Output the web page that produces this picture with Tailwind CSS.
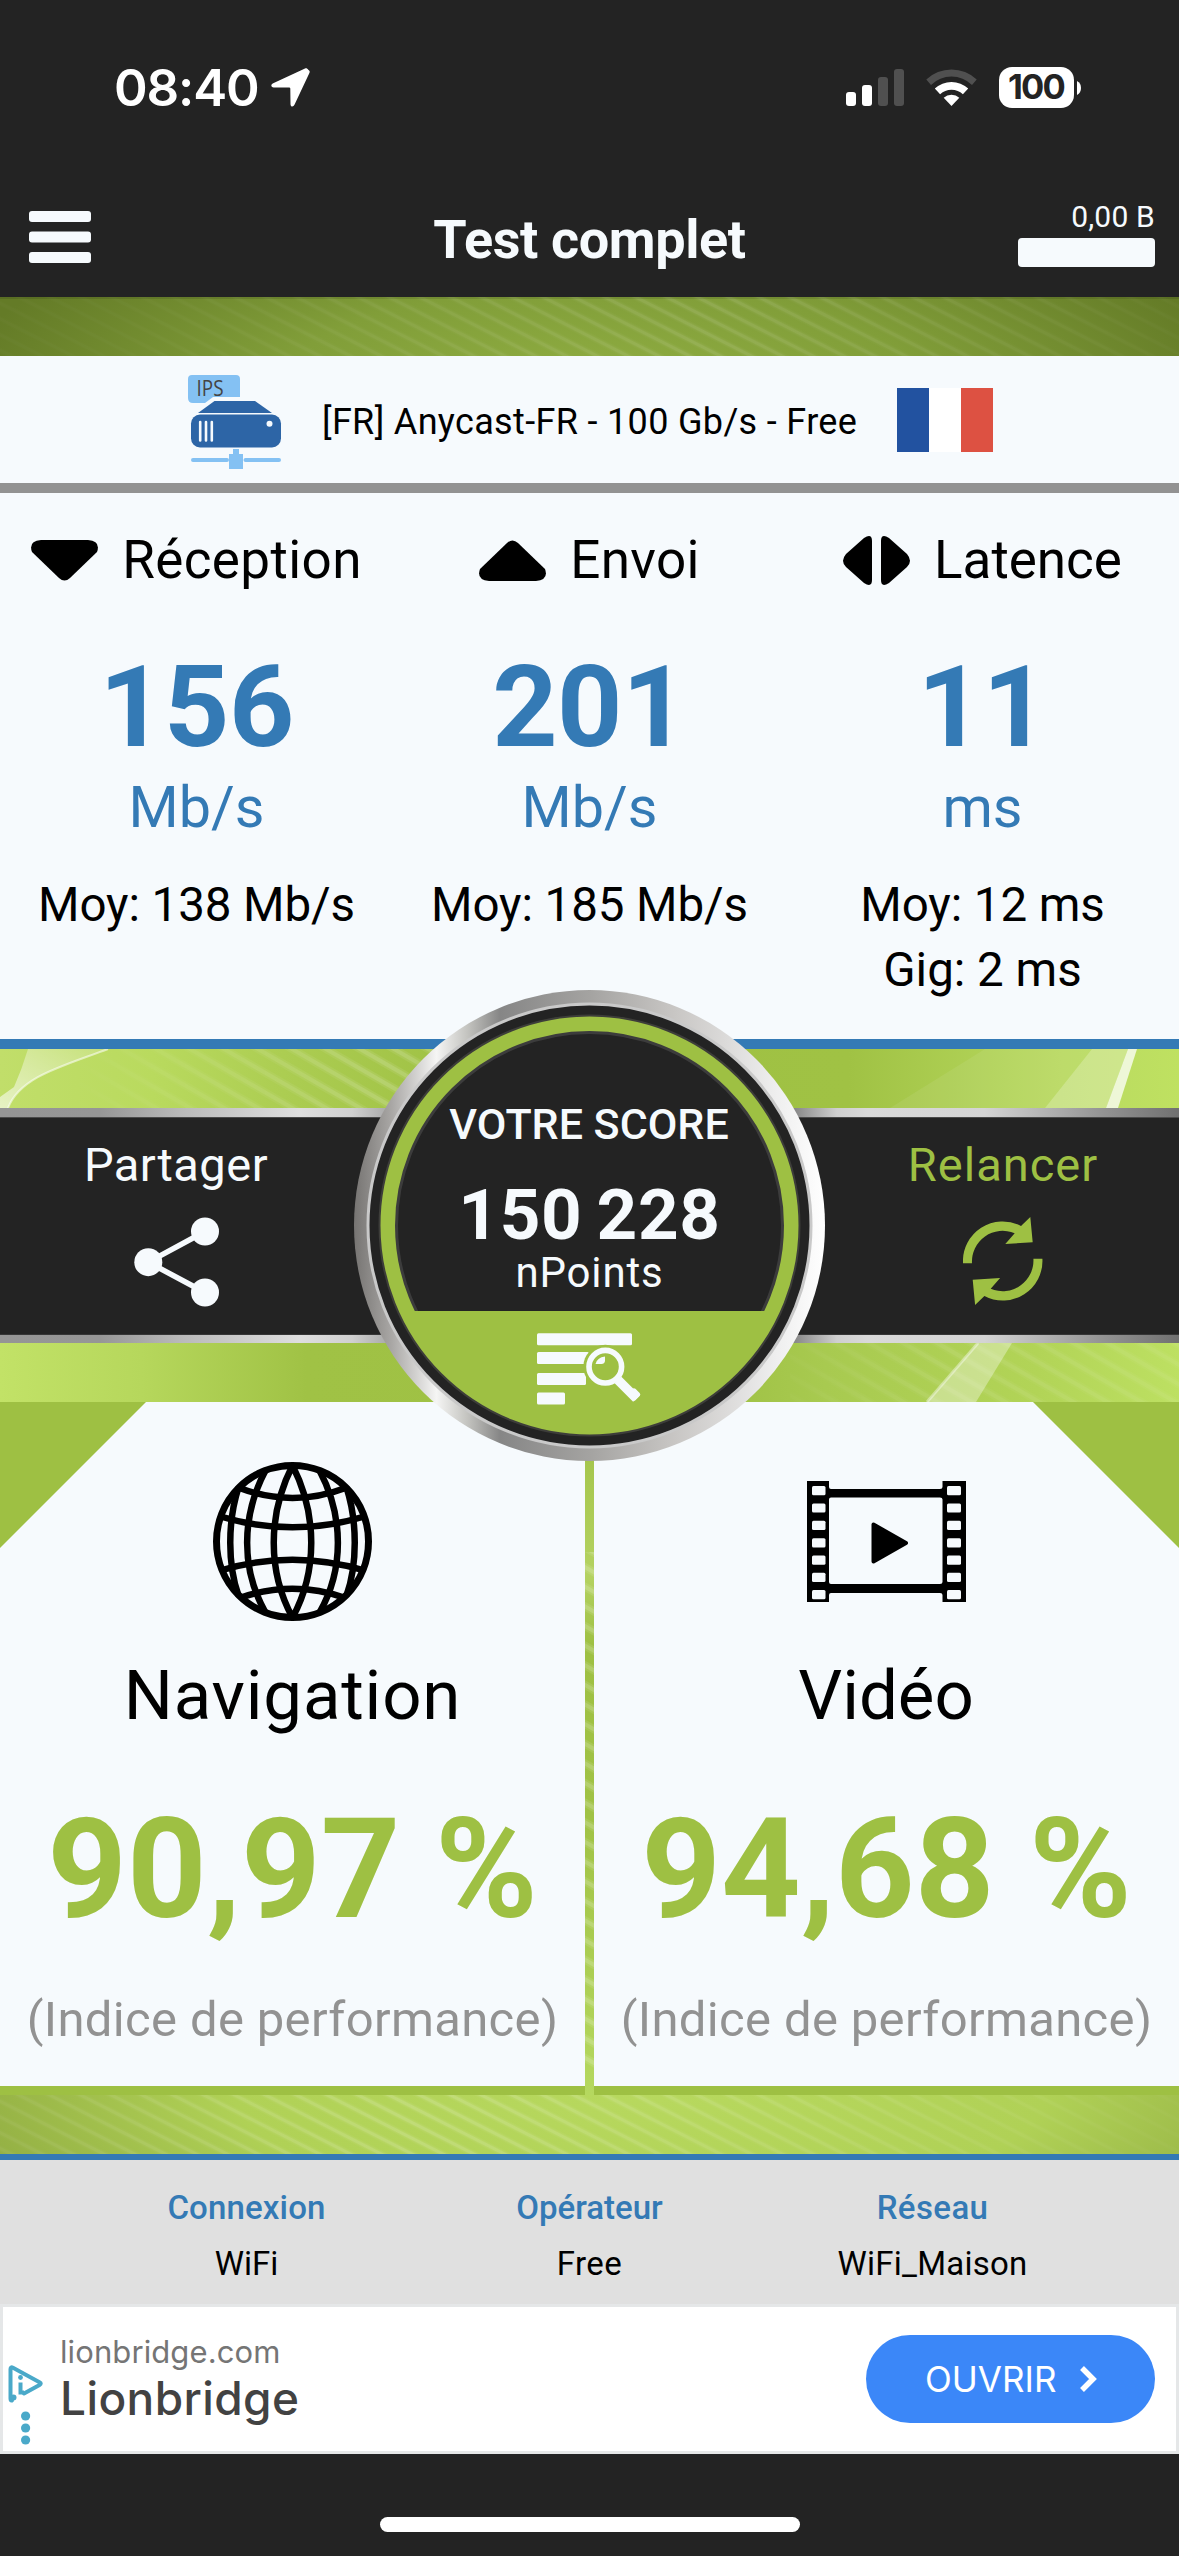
<!DOCTYPE html>
<html lang="fr">
<head>
<meta charset="utf-8">
<meta name="viewport" content="width=device-width, initial-scale=1">
<title>Test complet</title>
<script src="https://cdn.jsdelivr.net/npm/@tailwindcss/browser@4"></script>
</head>
<body class="bg-[#232323]">
<div class="flex h-[2556px] w-[1179px] flex-col overflow-hidden bg-[#232323] font-['Roboto',sans-serif] text-black">

  <!-- Status bar -->
  <div class="flex h-[176px] shrink-0 items-center justify-between pr-[98px] pb-px pl-[114px] text-white">
    <div class="flex items-center gap-[12px]">
      <span class="font-['Inter',sans-serif] text-[51px] leading-none font-semibold tracking-[-1.1px]">08:40</span>
      <svg class="h-[39px] w-[39px]" viewBox="0 0 39 39"><path d="M37.2 1.8C38.8 2.6 39 3.6 38.4 5L23.6 36.6C22.3 39.4 19.6 39 19.5 36.2L19.3 20.6Q19.2 19.6 18.2 19.6L2.7 19.4C-.1 19.3-.6 16.5 2.2 15.2L34 .6C35.3 0 36.4.6 37.2 1.8Z" fill="#fff"/></svg>
    </div>
    <div class="flex items-center">
      <svg class="h-[37px] w-[58px]" viewBox="0 0 58 37"><rect x="0" y="23" width="10" height="14" rx="3" fill="#fff"/><rect x="16" y="16" width="10" height="21" rx="3" fill="#fff"/><rect x="32" y="8" width="10" height="29" rx="3" fill="#505050"/><rect x="48" y="0" width="10" height="37" rx="3" fill="#505050"/></svg>
      <svg class="ml-[22px] h-[37px] w-[51px]" viewBox="0 0 51 37"><path d="M.3 10.6A36.5 36.5 0 0 1 50.7 10.6L46 15.9A29.5 29.5 0 0 0 5 15.9Z" fill="#505050"/><path d="M8.8 19.6A24.3 24.3 0 0 1 42.2 19.6L36.9 25.2A16.5 16.5 0 0 0 14.1 25.2Z" fill="#fff"/><path d="M17.7 28.8A11.5 11.5 0 0 1 33.3 28.8L25.5 37Z" fill="#fff"/></svg>
      <div class="ml-[22px] flex h-[41px] w-[75px] items-center justify-center rounded-[13px] bg-white font-['Inter',sans-serif] text-[34.5px] leading-none font-bold tracking-[-1.8px] text-[#232323]"><span class="-ml-px">100</span></div>
      <svg class="ml-[3px] h-[14px] w-[4px]" viewBox="0 0 4 14"><path d="M0 0Q4 2 4 7T0 14Z" fill="#fff"/></svg>
    </div>
  </div>

  <!-- Navigation bar -->
  <div class="grid h-[121px] shrink-0 grid-cols-[1fr_auto_1fr] items-start px-[24px] text-[#f6fafd]">
    <svg class="mt-[35px] ml-[5px] h-[52px] w-[62px]" viewBox="0 0 62 52" fill="#f6fafd"><rect width="62" height="11" rx="3"/><rect y="20.500" width="62" height="11" rx="3"/><rect y="41" width="62" height="11" rx="3"/></svg>
    <h1 class="mt-[32px] text-[54px] leading-[64px] font-bold tracking-[-0.4px]">Test complet</h1>
    <div class="mt-[23px] flex flex-col items-end gap-[3px]">
      <span class="text-[30px] leading-[36px] tracking-[0.2px]">0,00 B</span>
      <div class="h-[29px] w-[137px] rounded-[4px] bg-[#f6fafd]"></div>
    </div>
  </div>

  <!-- Decorative strip under the header -->
  <svg class="h-[59px] w-full shrink-0" viewBox="0 0 1179 59">
    <defs>
      <pattern id="lines" width="40" height="14" patternUnits="userSpaceOnUse" patternTransform="rotate(27)"><rect y="4" width="40" height="3" fill="#fff" opacity=".12"/><rect y="2.500" width="40" height="6" fill="#fff" opacity=".08"/></pattern>
      <pattern id="lines2" width="40" height="17" patternUnits="userSpaceOnUse" patternTransform="rotate(30)"><rect y="5" width="40" height="4" fill="#fff" opacity=".14"/><rect y="3" width="40" height="8" fill="#fff" opacity=".09"/></pattern>
      <radialGradient id="g1" gradientUnits="userSpaceOnUse" cx="0" cy="0" r="1" gradientTransform="translate(600 90) scale(640 200)"><stop offset="0" stop-color="#90ae42"/><stop offset=".5" stop-color="#819e39"/><stop offset="1" stop-color="#647b27"/></radialGradient>
      <linearGradient id="f1"><stop offset=".1" stop-color="#fff" stop-opacity=".1"/><stop offset=".6" stop-color="#fff" stop-opacity=".6"/><stop offset="1" stop-color="#fff" stop-opacity=".1"/></linearGradient>
      <mask id="m1"><rect width="1179" height="59" fill="url(#f1)"/></mask>
    </defs>
    <rect width="1179" height="59" fill="url(#g1)"/>
    <rect width="1179" height="59" fill="url(#lines)" mask="url(#m1)"/>
    <rect width="1179" height="2" fill="#000" opacity=".1"/>
  </svg>

  <!-- Server -->
  <div class="flex h-[127px] shrink-0 items-center bg-[#f6fafd] pl-[188px]">
    <svg class="mt-[4px] h-[94px] w-[94px]" viewBox="0 0 94 94">
      <path d="M4 0H48Q52 0 52 4V22H25L17 28H5Q0 28 0 23V4Q0 0 4 0Z" fill="#84c1f3"/>
      <text x="8.500" y="20.500" font-family="Open Sans, sans-serif" font-size="21" fill="#444" textLength="27" lengthAdjust="spacingAndGlyphs">IPS</text>
      <path d="M26.500 26H67L84 38H10Z" fill="#2d65a6"/>
      <rect x="3" y="39.500" width="90" height="33" rx="9" fill="#2d65a6"/>
      <path d="M12.200 47V65.500M18 47V65.500M23.800 47V65.500" stroke="#f6fafd" stroke-width="2.600" stroke-linecap="round"/>
      <circle cx="81.500" cy="48.700" r="3" fill="#f6fafd"/>
      <path d="M45 74H51V79H55V94H41V79H45Z" fill="#84c1f3"/>
      <path d="M5 85H39M57.500 85H91" stroke="#84c1f3" stroke-width="4" stroke-linecap="round"/>
    </svg>
    <span class="ml-[40px] w-[575px] pt-[4px] text-[36px] leading-[44px] tracking-[0.34px] whitespace-nowrap">[FR] Anycast-FR - 100 Gb/s - Free</span>
    <div class="grid h-[64px] w-[96px] grid-cols-3"><div class="bg-[#2252a0]"></div><div class="bg-white"></div><div class="bg-[#dd5142]"></div></div>
  </div>
  <div class="h-[10px] shrink-0 bg-[#929292]"></div>

  <!-- Measures -->
  <div class="grid h-[546px] shrink-0 grid-cols-3 bg-[#f6fafd] text-center">
    <div class="flex flex-col">
      <div class="flex h-[134px] items-center justify-center gap-[24px]">
        <svg class="h-[41px] w-[67px]" viewBox="0 0 67 41"><path d="M10 0H57Q70 1 66 12L39 38Q33.500 43 28 38L1 12Q-3 1 10 0Z"/></svg>
        <span class="text-[53px] leading-[64px] tracking-[0.4px]">Réception</span>
      </div>
      <span class="mt-[20px] text-[114px] leading-[120px] font-bold tracking-[-0.5px] text-[#347ab5]">156</span>
      <span class="text-[57.500px] leading-[82px] text-[#347ab5]">Mb/s</span>
      <span class="mt-[24px] text-[47.500px] leading-[65px] tracking-[-0.1px]">Moy: 138 Mb/s</span>
    </div>
    <div class="flex flex-col">
      <div class="flex h-[134px] items-center justify-center gap-[24px]">
        <svg class="h-[41px] w-[67px]" viewBox="0 0 67 41"><path d="M10 41H57Q70 40 66 29L39 3Q33.500 -2 28 3L1 29Q-3 40 10 41Z"/></svg>
        <span class="text-[53px] leading-[64px] tracking-[0.3px]">Envoi</span>
      </div>
      <span class="mt-[20px] text-[114px] leading-[120px] font-bold tracking-[-0.5px] text-[#347ab5]">201</span>
      <span class="text-[57.500px] leading-[82px] text-[#347ab5]">Mb/s</span>
      <span class="mt-[24px] text-[47.500px] leading-[65px] tracking-[-0.1px]">Moy: 185 Mb/s</span>
    </div>
    <div class="flex flex-col">
      <div class="flex h-[134px] items-center justify-center gap-[24px]">
        <svg class="h-[49px] w-[67px]" viewBox="0 0 67 49"><path d="M29 5V44Q29 52 21 47L3 31Q-3 25 3 18L21 2Q29 -3 29 5ZM38 5V44Q38 52 46 47L64 31Q70 25 64 18L46 2Q38 -3 38 5Z"/></svg>
        <span class="text-[53px] leading-[64px]">Latence</span>
      </div>
      <span class="mt-[20px] text-[114px] leading-[120px] font-bold tracking-[-0.5px] text-[#347ab5]">11</span>
      <span class="text-[57.500px] leading-[82px] text-[#347ab5]">ms</span>
      <span class="mt-[24px] text-[47.500px] leading-[65px] tracking-[-0.1px]">Moy: 12 ms</span>
      <span class="text-[47.500px] leading-[65px]">Gig: 2 ms</span>
    </div>
  </div>
  <div class="h-[10px] shrink-0 bg-[#347ab5]"></div>

  <!-- Score band -->
  <div class="relative z-10 h-[353px] shrink-0">
    <svg class="absolute inset-0 h-[353px] w-[1179px]" viewBox="0 0 1179 353">
      <defs>
        <linearGradient id="u1"><stop offset="0" stop-color="#c1de6a"/><stop offset=".13" stop-color="#b9da5e"/><stop offset=".24" stop-color="#accd52"/><stop offset=".4" stop-color="#9ec043"/><stop offset=".72" stop-color="#a0c244"/><stop offset=".9" stop-color="#b8d95f"/><stop offset="1" stop-color="#bfe161"/></linearGradient>
        <linearGradient id="u2"><stop offset="0" stop-color="#c2e267"/><stop offset=".12" stop-color="#b6d75c"/><stop offset=".26" stop-color="#a0c245"/><stop offset=".6" stop-color="#9ec043"/><stop offset=".7" stop-color="#a8ca50"/><stop offset=".88" stop-color="#b2d457"/><stop offset="1" stop-color="#bde062"/></linearGradient>
        <linearGradient id="f2" gradientUnits="userSpaceOnUse" x1="70" y1="0" x2="460" y2="0"><stop offset="0" stop-color="#fff" stop-opacity="0"/><stop offset=".8" stop-color="#fff" stop-opacity=".9"/><stop offset="1" stop-color="#fff" stop-opacity=".8"/></linearGradient>
        <mask id="m2"><rect width="470" height="59" fill="url(#f2)"/></mask>
        <linearGradient id="f4" gradientUnits="userSpaceOnUse" x1="790" y1="0" x2="1179" y2="0"><stop offset="0" stop-color="#fff" stop-opacity=".1"/><stop offset=".4" stop-color="#fff" stop-opacity=".45"/><stop offset="1" stop-color="#fff" stop-opacity=".35"/></linearGradient>
        <mask id="m4"><rect x="790" y="294" width="389" height="59" fill="url(#f4)"/></mask>
        <linearGradient id="sw" x1="0" x2="1" y1="1" y2="0"><stop offset="0" stop-color="#fff" stop-opacity=".6"/><stop offset="1" stop-color="#fff" stop-opacity=".15"/></linearGradient>
        <linearGradient id="s1"><stop offset="0" stop-color="#959595"/><stop offset=".25" stop-color="#969696"/><stop offset=".45" stop-color="#b9b9b9"/><stop offset=".75" stop-color="#dedede"/><stop offset=".88" stop-color="#d0d0d0"/><stop offset="1" stop-color="#9c9c9c"/></linearGradient>
        <linearGradient id="s2"><stop offset="0" stop-color="#808080"/><stop offset=".12" stop-color="#cfcfcf"/><stop offset=".2" stop-color="#d9d9d9"/><stop offset=".5" stop-color="#d4d4d4"/><stop offset=".8" stop-color="#949494"/><stop offset="1" stop-color="#707070"/></linearGradient>
      </defs>
      <rect width="1179" height="180" fill="url(#u1)"/>
      <rect y="180" width="1179" height="173" fill="url(#u2)"/>
      <rect width="470" height="59" fill="url(#lines2)" mask="url(#m2)"/>
      <path d="M28 0H108C60 18 20 28 8 59H0V48L14 38Q22 20 28 0Z" fill="url(#sw)"/>
      <path d="M108 0C60 18 20 28 8 59" fill="none" stroke="#fff" stroke-opacity=".55" stroke-width="2"/>
      <path d="M985 0L890 59H1045L1092 0Z" fill="#fff" opacity=".07"/>
      <path d="M1092 0H1128L1106 59H1045Z" fill="#fff" opacity=".28"/>
      <path d="M1128 0H1137L1118 59H1106Z" fill="#fff" opacity=".75"/>
      <rect x="790" y="294" width="389" height="59" fill="url(#lines2)" mask="url(#m4)"/>
      <path d="M978 294H1012L976 353H927Z" fill="#fff" opacity=".34"/>
      <path d="M978 294L927 353" stroke="#fff" stroke-opacity=".4" stroke-width="3"/>
      <rect y="59" width="400" height="235" fill="url(#s1)"/>
      <rect x="790" y="59" width="389" height="235" fill="url(#s2)"/>
      <rect y="68" width="1179" height="218" fill="#4a4a4a"/>
      <rect y="69" width="1179" height="216.500" fill="#232323"/>
    </svg>

    <div class="relative flex justify-between pt-[90px]">
      <div class="flex w-[354px] flex-col items-center text-[#f6fafd]">
        <span class="-ml-[2px] h-[51px] overflow-hidden text-[47px] leading-[51px] tracking-[0.5px]">Partager</span>
        <svg class="mt-[27px] h-[90px] w-[86px]" viewBox="0 0 86 90" fill="#f6fafd"><path d="M71 14.500L14.300 45.200L71 75.500" fill="none" stroke="#f6fafd" stroke-width="5.500"/><circle cx="71" cy="14.500" r="14"/><circle cx="14.300" cy="45.200" r="14"/><circle cx="71" cy="75.500" r="14"/></svg>
      </div>
      <div class="flex w-[352px] flex-col items-center text-[#9ec043]">
        <span class="h-[51px] overflow-hidden text-[47px] leading-[51px] tracking-[1px]">Relancer</span>
        <svg class="mt-[27px] -ml-px h-[88px] w-[80px]" viewBox="0 0 80 88" fill="#9ec043"><path d="M0 46.300A39.700 39.700 0 0 1 58 9L67.300 0L69.700 25.300L42.300 27L51.700 16.300A30.700 30.700 0 0 0 9 46.300Z"/><path d="M0 46.300A39.700 39.700 0 0 1 58 9L67.300 0L69.700 25.300L42.300 27L51.700 16.300A30.700 30.700 0 0 0 9 46.300Z" transform="rotate(180 39.700 44)"/></svg>
      </div>
    </div>

    <!-- Score dial, overlapping the neighbouring sections -->
    <div class="absolute -top-[59px] left-[354px] h-[471px] w-[471px]">
      <svg class="absolute inset-0 h-[471px] w-[471px]" viewBox="0 0 471 471">
        <defs>
          <linearGradient id="ring"><stop offset="0" stop-color="#767472"/><stop offset=".08" stop-color="#a9a7a5"/><stop offset=".175" stop-color="#f5f5f4"/><stop offset=".24" stop-color="#c4c4c0"/><stop offset=".31" stop-color="#868686"/><stop offset=".5" stop-color="#a4a3a1"/><stop offset=".68" stop-color="#c8c6c4"/><stop offset=".9" stop-color="#efefef"/><stop offset="1" stop-color="#fff"/></linearGradient>
          <clipPath id="chord"><rect width="471" height="321"/></clipPath>
        </defs>
        <circle cx="235.500" cy="235.500" r="235.500" fill="url(#ring)"/>
        <circle cx="235.500" cy="235.500" r="221.500" fill="#232323" stroke="#c9c9c9" stroke-width="3"/>
        <circle cx="235.500" cy="235.500" r="210" fill="#9ec043" stroke="#3d3d3a" stroke-width="2"/>
        <g clip-path="url(#chord)"><circle cx="235.500" cy="235.500" r="193" fill="#232323" stroke="#3c3c3c" stroke-width="3"/></g>
        <g fill="#f6fafd">
          <rect x="183" y="343.300" width="95" height="12" rx="1.500"/>
          <rect x="183" y="362" width="52" height="12" rx="1.500"/>
          <rect x="183" y="383" width="49" height="12" rx="1.500"/>
          <rect x="183" y="402.500" width="28" height="12" rx="1.500"/>
        </g>
        <circle cx="251.300" cy="376.700" r="22" fill="#9ec043"/>
        <circle cx="251.300" cy="376.700" r="16.300" fill="none" stroke="#f6fafd" stroke-width="5.600"/>
        <path d="M264 390L282.500 408.500" stroke="#f6fafd" stroke-width="9.500"/>
        <rect x="275" y="399.500" width="10" height="10" rx="2" fill="#f6fafd" transform="rotate(45 280 404.500)"/>
        <path d="M241.500 374Q243 367.500 251 366.500V371Q250.500 374 247.500 374Z" fill="#f6fafd"/>
      </svg>
      <div class="relative flex flex-col items-center pt-[109px] text-[#f6fafd]">
        <span class="-ml-px text-[43px] leading-[50px] font-medium">VOTRE SCORE</span>
        <span class="mt-[30px] text-[71px] leading-[72px] font-bold tracking-[0.6px] [word-spacing:-4px]">150 228</span>
        <span class="text-[42px] leading-[44px] tracking-[0.8px]">nPoints</span>
      </div>
    </div>
  </div>

  <!-- Results -->
  <div class="relative grid h-[693px] shrink-0 grid-cols-2 gap-[9px] text-center">
    <svg class="absolute top-0 left-[585px] h-[693px] w-[9px]" viewBox="0 0 9 693">
      <defs><linearGradient id="v" x1="0" y1="0" x2="0" y2="1"><stop offset="0" stop-color="#9ec043"/><stop offset=".25" stop-color="#b4d261"/><stop offset=".35" stop-color="#9ec043"/><stop offset=".6" stop-color="#a0c245"/><stop offset="1" stop-color="#b5d85f"/></linearGradient></defs>
      <rect width="9" height="693" fill="url(#v)"/><rect y="150" width="9" height="520" fill="url(#lines2)"/>
    </svg>
    <div class="relative flex flex-col items-center border-b-[9px] border-[#9ec043] bg-[#f6fafd] pt-[60px]">
      <svg class="absolute top-0 left-0 h-[146px] w-[146px]" viewBox="0 0 146 146"><path d="M0 0H146L0 146Z" fill="#9ec043"/></svg>
      <svg class="h-[159px] w-[159px]" viewBox="-79.500 -79.500 159 159" fill="none" stroke="#000" stroke-width="6.500">
        <circle r="76" stroke-width="7"/>
        <path d="M0 -76C-25 -27 -25 30 0 76M0 -76C25 -27 25 30 0 76M-27 -71C-51.500 -25 -51.500 28 -27 71M27 -71C51.500 -25 51.500 28 27 71M-54 -54C-65 -20 -65 23 -54 54M54 -54C65 -20 65 23 54 54"/>
        <path d="M-53 -53.500Q0 -33.500 53 -53.500M-72 -25Q0 -3.500 72 -25M-72 29Q0 7.500 72 29M-53 56.500Q0 38 53 56.500"/>
      </svg>
      <span class="mt-[35px] text-[69px] leading-[80px] tracking-[0.8px]">Navigation</span>
      <span class="mt-[64px] text-[139px] leading-[140px] font-bold text-[#9ec043]">90,97 %</span>
      <span class="mt-[50px] text-[49px] leading-[60px] tracking-[0.35px] text-[#929292]">(Indice de performance)</span>
    </div>
    <div class="relative flex flex-col items-center border-b-[9px] border-[#9ec043] bg-[#f6fafd] pt-[60px]">
      <svg class="absolute top-0 right-0 h-[146px] w-[146px]" viewBox="0 0 146 146"><path d="M0 0H146V146Z" fill="#9ec043"/></svg>
      <svg class="h-[159px] w-[159px]" viewBox="0 -19 159 159">
        <path d="M0 0H22V6Q22 8 24 8H133Q135.500 8 135.500 6V0H159V121H135.500V114Q135.500 112 133 112H24Q22 112 22 114V121H0ZM24 16.500Q22 16.500 22 18.500V101Q22 103 24 103H133Q135.500 103 135.500 101V18.500Q135.500 16.500 133 16.500Z" fill-rule="evenodd"/>
        <g fill="#f6fafd"><rect x="5" y="5" width="13.500" height="9.200" rx="1.500"/><rect x="5" y="22.400" width="13.500" height="9.200" rx="1.500"/><rect x="5" y="39.800" width="13.500" height="9.200" rx="1.500"/><rect x="5" y="57.200" width="13.500" height="9.200" rx="1.500"/><rect x="5" y="74.500" width="13.500" height="9.200" rx="1.500"/><rect x="5" y="91.800" width="13.500" height="9.200" rx="1.500"/><rect x="5" y="109" width="13.500" height="9.200" rx="1.500"/>
        <rect x="140" y="5" width="14" height="9.200" rx="1.500"/><rect x="140" y="22.400" width="14" height="9.200" rx="1.500"/><rect x="140" y="39.800" width="14" height="9.200" rx="1.500"/><rect x="140" y="57.200" width="14" height="9.200" rx="1.500"/><rect x="140" y="74.500" width="14" height="9.200" rx="1.500"/><rect x="140" y="91.800" width="14" height="9.200" rx="1.500"/><rect x="140" y="109" width="14" height="9.200" rx="1.500"/></g>
        <path d="M66.500 43.500V80.500L99 62Z" stroke="#000" stroke-width="4" stroke-linejoin="round"/>
      </svg>
      <span class="mt-[35px] -ml-px text-[69px] leading-[80px]">Vidéo</span>
      <span class="mt-[64px] text-[139px] leading-[140px] font-bold text-[#9ec043]">94,68 %</span>
      <span class="mt-[50px] text-[49px] leading-[60px] tracking-[0.35px] text-[#929292]">(Indice de performance)</span>
    </div>
  </div>

  <!-- Decorative strip above the footer -->
  <svg class="h-[59px] w-full shrink-0" viewBox="0 0 1179 59">
    <defs>
      <radialGradient id="g3" gradientUnits="userSpaceOnUse" cx="0" cy="0" r="1" gradientTransform="translate(640 -10) scale(680 220)"><stop offset="0" stop-color="#b8d95f"/><stop offset=".6" stop-color="#b0d156"/><stop offset="1" stop-color="#94b044"/></radialGradient>
      <linearGradient id="f3"><stop offset="0" stop-color="#fff" stop-opacity=".3"/><stop offset=".35" stop-color="#fff" stop-opacity=".95"/><stop offset="1" stop-color="#fff" stop-opacity=".1"/></linearGradient>
      <mask id="m3"><rect width="1179" height="59" fill="url(#f3)"/></mask>
    </defs>
    <rect width="1179" height="59" fill="url(#g3)"/>
    <rect width="1179" height="59" fill="url(#lines)" mask="url(#m3)"/>
  </svg>

  <!-- Connection details -->
  <div class="grid h-[150px] shrink-0 grid-cols-3 border-t-[6px] border-[#347ab5] bg-[#e0e0e0] px-[75px] pt-[20px] text-center text-[33px] leading-[56px]">
    <div class="flex flex-col"><span class="font-medium tracking-[0.15px] text-[#347ab5]">Connexion</span><span>WiFi</span></div>
    <div class="flex flex-col"><span class="font-medium text-[#347ab5]">Opérateur</span><span class="tracking-[0.4px]">Free</span></div>
    <div class="flex flex-col"><span class="font-medium tracking-[0.4px] text-[#347ab5]">Réseau</span><span class="tracking-[0.25px]">WiFi_Maison</span></div>
  </div>

  <!-- Advert -->
  <div class="flex h-[150px] shrink-0 items-start border-[3px] border-[#e5e7e8] bg-white font-['Inter',sans-serif]">
    <svg class="mt-[57px] ml-[3px] h-[82px] w-[42px]" viewBox="0 0 42 82">
      <path d="M6 36.500Q4.500 37 4.500 34.500V5Q4.500 2.500 7 3.800L33.500 18.200Q36 19.500 33.500 21L18 29.500" fill="none" stroke="#4aa9c9" stroke-width="4" stroke-linecap="round"/>
      <circle cx="7.500" cy="33.500" r="3" fill="#4aa9c9"/><circle cx="14.500" cy="13.500" r="2.400" fill="#4aa9c9"/><path d="M14.500 18.500V28.500H18" fill="none" stroke="#4aa9c9" stroke-width="4"/>
      <circle cx="19.600" cy="52" r="4.600" fill="#4aa9c9"/><circle cx="19.600" cy="64" r="4.600" fill="#4aa9c9"/><circle cx="19.600" cy="76" r="4.600" fill="#4aa9c9"/>
    </svg>
    <div class="mt-[22px] ml-[12px] flex flex-col leading-[46px]">
      <span class="text-[31px] tracking-[0.1px] text-[#757575]">lionbridge.com</span>
      <span class="text-[46px] font-medium tracking-[0.4px] text-[#424242]">Lionbridge</span>
    </div>
    <div class="mt-[28px] mr-[21px] ml-auto flex h-[88px] w-[289px] items-center rounded-full bg-[#3b87f8] pl-[59px] text-[35px] text-white">
      <span>OUVRIR</span>
      <svg class="ml-[22px] h-[28px] w-[20px]" viewBox="0 0 20 28"><path d="M4 3L15 14L4 25" fill="none" stroke="#fff" stroke-width="5.500"/></svg>
    </div>
  </div>

  <!-- Home indicator -->
  <div class="flex h-[102px] shrink-0 justify-center pt-[63px]"><div class="h-[15px] w-[420px] rounded-full bg-white"></div></div>
</div>
</body>
</html>
